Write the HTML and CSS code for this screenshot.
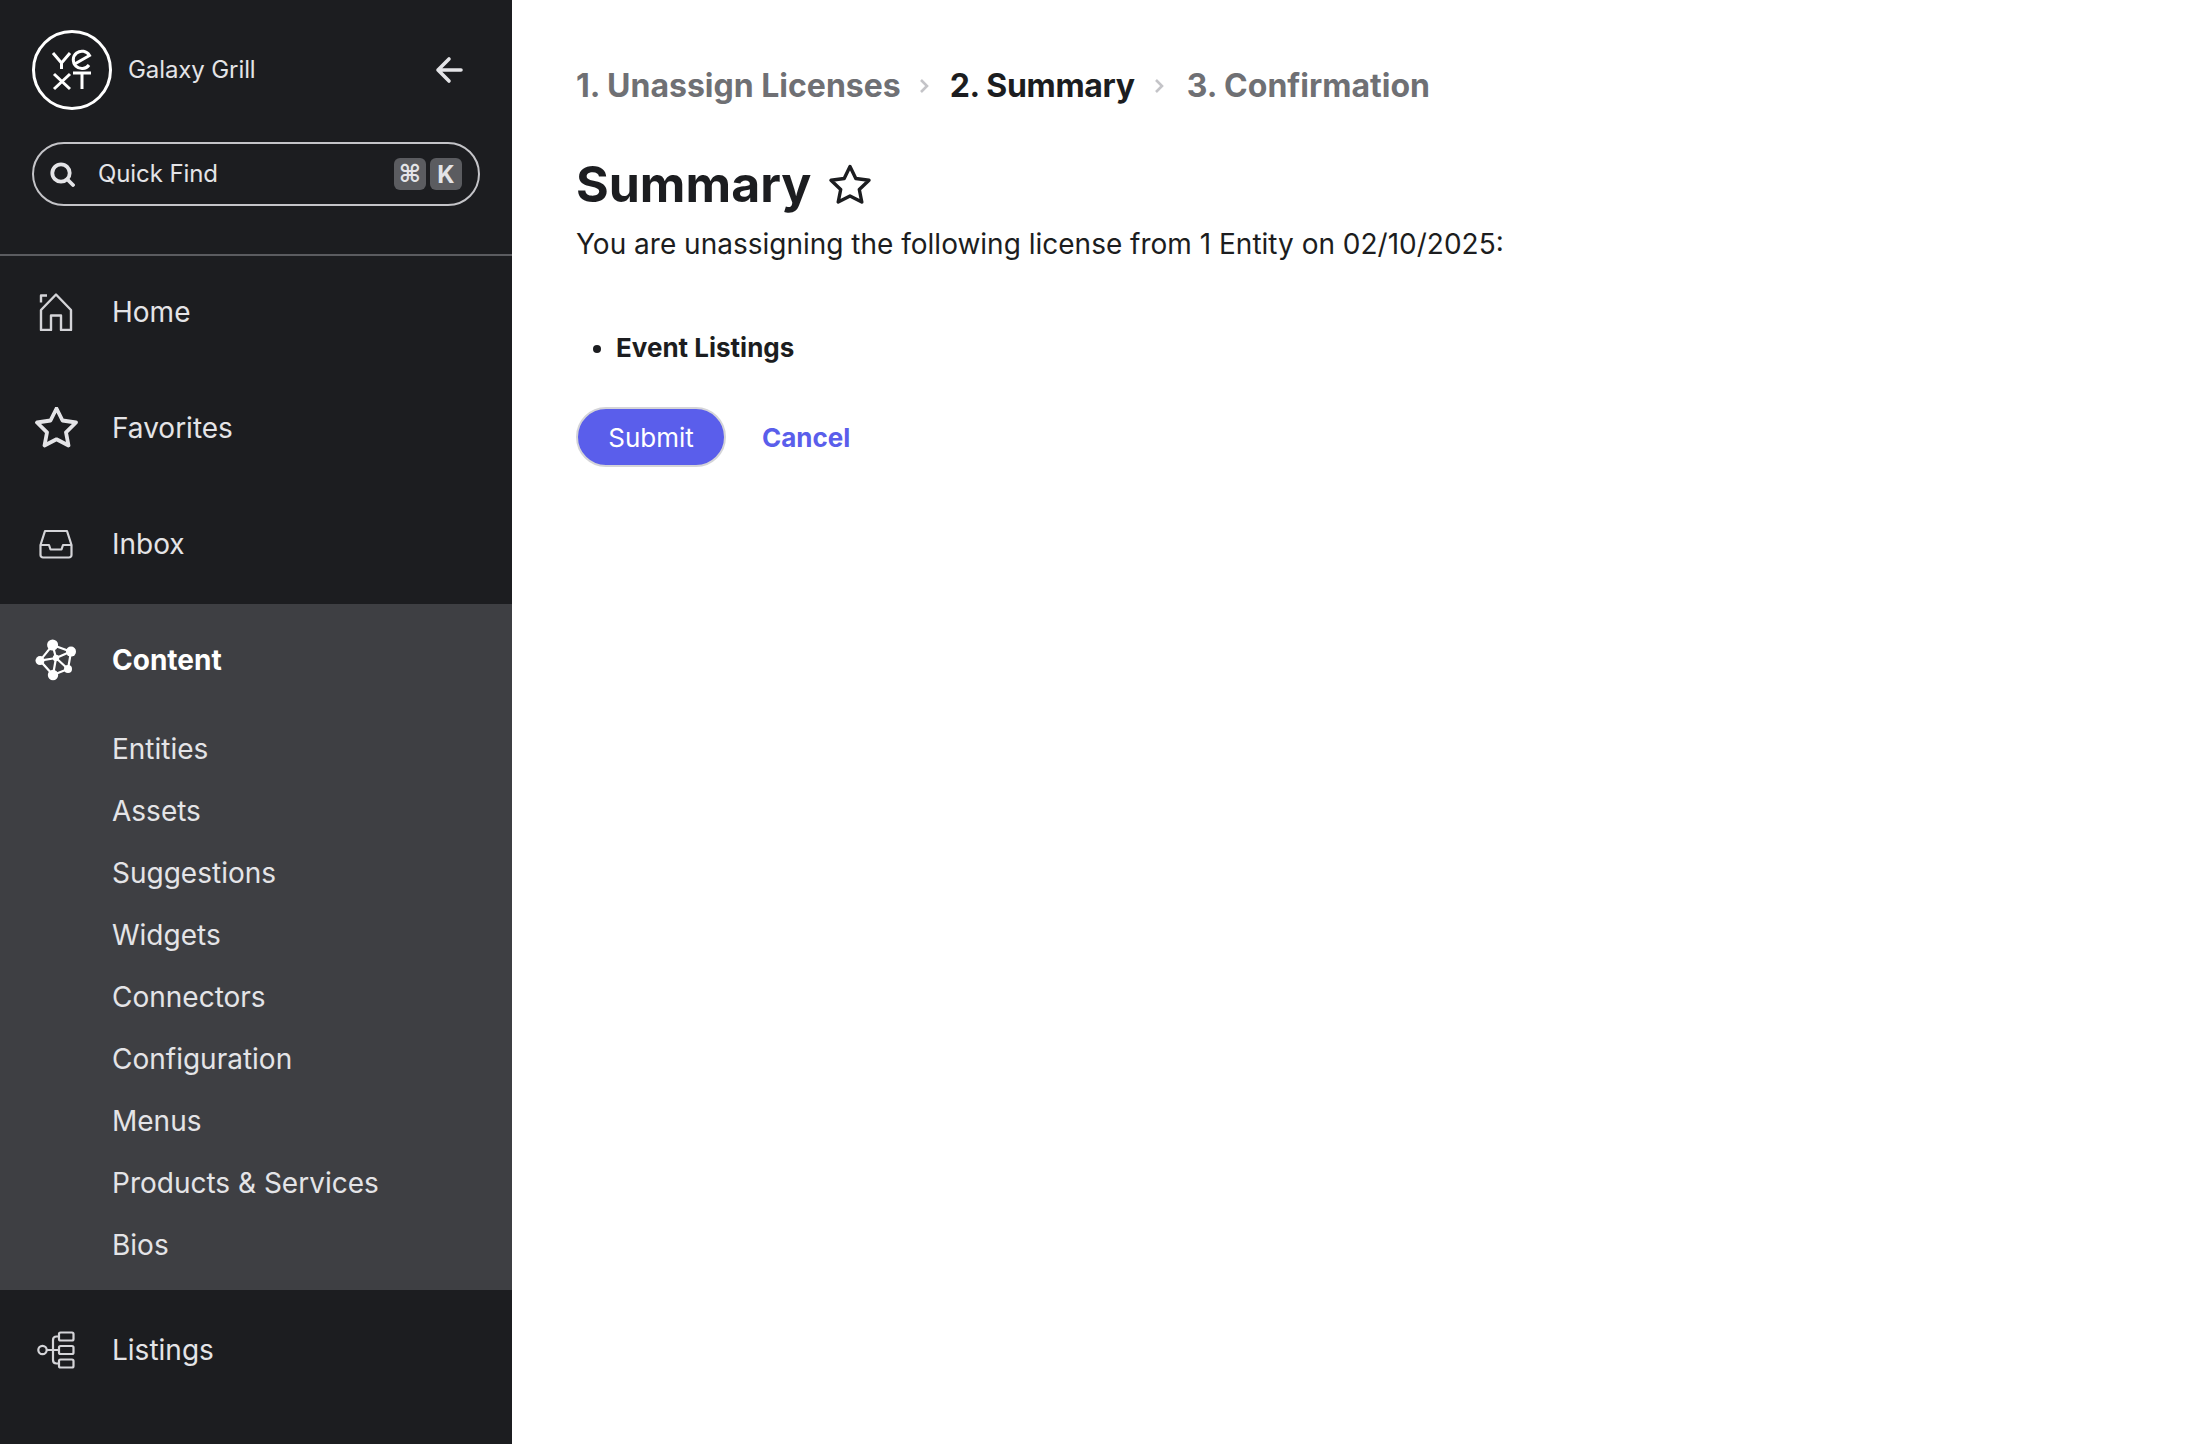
FILE: index.html
```html
<!DOCTYPE html>
<html lang="en">
<head>
<meta charset="utf-8">
<title>Summary</title>
<link rel="stylesheet" href="styles.css">
</head>
<body>
<div class="app">
  <aside class="sidebar">
    <header class="side-head">
      <div class="brand">
        <div class="logo">
          <svg viewBox="0 0 80 80" width="80" height="80" fill="none" stroke="#fff">
            <circle cx="40" cy="40" r="38.5" stroke-width="3"/>
            <g stroke-width="3">
              <path d="M21 23L29.500 33L38 23M29.500 33V39"/>
              <path d="M43.500 33.500L57.500 25.500A8.700 8.700 0 1 0 57 35"/>
              <path d="M22 44L38 59M38 44L22 59"/>
              <path d="M41 43H59M50 43V59"/>
            </g>
          </svg>
        </div>
        <span class="brand-name">Galaxy Grill</span>
        <svg class="back" viewBox="0 0 28 28" width="28" height="28" fill="none" stroke="#e4e4e7" stroke-width="3.600" stroke-linecap="round" stroke-linejoin="round">
          <path d="M26 14H3M14 3L3 14 14 25"/>
        </svg>
      </div>
      <div class="search">
        <svg class="search-icon" viewBox="0 0 25 25" width="25" height="25" fill="none" stroke="#e4e4e7" stroke-width="3.800" stroke-linecap="round">
          <circle cx="11" cy="11" r="8.700"/><path d="M17.500 17.500L23 23"/>
        </svg>
        <span class="search-label">Quick Find</span>
        <span class="key key-cmd">⌘</span>
        <span class="key">K</span>
      </div>
    </header>
    <nav class="nav">
      <a class="nav-row">
        <svg class="nav-icon" viewBox="0 0 48 38" width="48" height="38" fill="none" stroke="#d4d4d8" stroke-width="2.400" stroke-linejoin="round">
          <path d="M9 9.500V2.500H15M9 17L24 1.500L39 17V37H29V22.500H19V37H9Z"/>
        </svg>
        <span>Home</span>
      </a>
      <a class="nav-row">
        <svg class="nav-icon" viewBox="0 0 48 42" width="48" height="42" fill="none" stroke="#e4e4e7" stroke-width="3.800" stroke-linejoin="round">
          <path d="M24.500 1.500L30.500 13.500 44 15.500 34 25.300 36.500 38.500 24.500 32.300 12.500 38.500 15 25.300 5 15.500 18.500 13.500Z"/>
        </svg>
        <span>Favorites</span>
      </a>
      <a class="nav-row">
        <svg class="nav-icon" viewBox="0 0 48 30" width="48" height="30" fill="none" stroke="#d4d4d8" stroke-width="2.200" stroke-linejoin="round">
          <path d="M13 2H35L39.500 16V26A2.500 2.500 0 0 1 37 28.500H11A2.500 2.500 0 0 1 8.500 26V16ZM8.500 16H17L18.500 20.500H29.500L31 16H39.500"/>
        </svg>
        <span>Inbox</span>
      </a>
      <section class="nav-group">
        <a class="nav-row nav-row-active">
          <svg class="nav-icon" viewBox="0 0 48 48" width="48" height="48" fill="none" stroke="#fff" stroke-width="2.200">
            <path d="M20.600 9L39 15.600 36 33 21 39 8 24.600ZM20.600 9L24 22M39 15.600L24 22M8 24.600L24 22M36 33L24 22M21 39L24 22"/>
            <g fill="#fff" stroke="none">
              <circle cx="20.600" cy="9" r="5.500"/><circle cx="39" cy="15.600" r="5"/><circle cx="8" cy="24.600" r="4.500"/><circle cx="24" cy="22" r="3.200"/><circle cx="36" cy="33" r="4"/><circle cx="21" cy="39" r="5.200"/>
            </g>
          </svg>
          <span>Content</span>
        </a>
        <ul class="sub">
          <li>Entities</li>
          <li>Assets</li>
          <li>Suggestions</li>
          <li>Widgets</li>
          <li>Connectors</li>
          <li>Configuration</li>
          <li>Menus</li>
          <li>Products &amp; Services</li>
          <li>Bios</li>
        </ul>
      </section>
      <a class="nav-row nav-row-after">
        <svg class="nav-icon" viewBox="0 0 48 38" width="48" height="38" fill="none" stroke="#d4d4d8" stroke-width="2.200">
          <circle cx="10.500" cy="19" r="4.200"/>
          <path d="M14.700 19H27M27 5.500H24.500Q21 5.500 21 9V29Q21 32.500 24.500 32.500H27"/>
          <rect x="27" y="1.500" width="14.500" height="8" rx="1.500"/>
          <rect x="27" y="15" width="14.500" height="8" rx="1.500"/>
          <rect x="27" y="28.500" width="14.500" height="8" rx="1.500"/>
        </svg>
        <span>Listings</span>
      </a>
    </nav>
  </aside>
  <main class="main">
    <ol class="steps">
      <li class="step">1. Unassign Licenses</li>
      <li class="sep"><svg viewBox="0 0 10 16" width="10" height="16" fill="none" stroke="#c4c4c8" stroke-width="2.600"><path d="M2 2L8 8 2 14"/></svg></li>
      <li class="step step-current">2. Summary</li>
      <li class="sep sep-last"><svg viewBox="0 0 10 16" width="10" height="16" fill="none" stroke="#c4c4c8" stroke-width="2.600"><path d="M2 2L8 8 2 14"/></svg></li>
      <li class="step">3. Confirmation</li>
    </ol>
    <div class="title-row">
      <h1 class="title">Summary</h1>
      <svg class="title-star" viewBox="0 0 44 40" width="44" height="40" fill="none" stroke="#1c1d20" stroke-width="3.400" stroke-linejoin="round">
        <path d="M22 2.500L27.800 14.500 41 16.300 31.300 25.500 33.800 38 22 32 10.200 38 12.700 25.500 3 16.300 16.200 14.500Z"/>
      </svg>
    </div>
    <p class="lead">You are unassigning the following license from 1 Entity on 02/10/2025:</p>
    <ul class="licenses"><li>Event Listings</li></ul>
    <div class="actions">
      <button class="btn-submit" type="button">Submit</button>
      <a class="btn-cancel">Cancel</a>
    </div>
  </main>
</div>
</body>
</html>
```

FILE: styles.css
```css
* { box-sizing: border-box; }
html, body { margin: 0; height: 100%; overflow: hidden; }
body { font-family: Inter, "Liberation Sans", sans-serif; background: #fff; color: #1c1d20; }
.app { display: flex; height: 1444px; }

.sidebar { width: 512px; flex: none; background: #1c1d20; color: #e4e4e7; overflow: hidden; }
.side-head { padding: 30px 32px 0; height: 256px; border-bottom: 2px solid #5b5c60; }
.brand { display: flex; align-items: center; height: 80px; }
.logo { width: 80px; height: 80px; flex: none; }
.logo svg { display: block; }
.brand-name { margin-left: 16px; padding-bottom: 2px; font-size: 24px; letter-spacing: -0.1px; color: #e4e4e7; flex: 1; }
.back { margin-right: 17px; }
.search { display: flex; align-items: center; height: 64px; margin-top: 32px; padding: 0 16px 0 16px; border: 2px solid #c4c4c8; border-radius: 32px; }
.search-icon { flex: none; }
.search-label { flex: 1; margin-left: 23px; padding-bottom: 2px; font-size: 24px; letter-spacing: -0.1px; color: #e4e4e7; }
.key { display: flex; align-items: center; justify-content: center; width: 32px; height: 32px; border-radius: 6px; background: #5b5c60; color: #e4e4e7; font-size: 24px; font-weight: 700; margin-left: 4px; }
.key-cmd { font-family: "DejaVu Sans", sans-serif; font-weight: 700; font-size: 24px; }

.nav { display: block; }
.nav-row { display: flex; align-items: center; height: 116px; padding: 0 0 4px 32px; font-size: 28px; color: #e4e4e7; }
.nav-row-after { padding: 4px 0 0 32px; }
.nav-icon { flex: none; width: 48px; margin-right: 32px; }
.nav-group { background: #3e3f43; }
.nav-row-active { color: #fff; font-weight: 700; }
.sub { list-style: none; margin: -2px 0 0; padding: 0 0 14px 112px; }
.sub li { height: 62px; line-height: 62px; font-size: 28px; color: #e4e4e7; }

.main { flex: 1; padding: 62px 64px 0; }
.steps { list-style: none; display: flex; align-items: center; margin: 0; padding: 0; font-size: 32px; font-weight: 700; line-height: 48px; color: #6f7074; }
.step-current { color: #1c1d20; letter-spacing: -0.3px; }
.sep { display: flex; margin: 0 21px 0 18px; }
.sep-last { margin: 0 23px 0 19px; }
.title-row { display: flex; align-items: center; margin-top: 38px; }
.title { margin: 0; font-size: 50px; font-weight: 700; line-height: 72px; color: #1c1d20; }
.title-star { margin-left: 17px; }
.lead { margin: 3px 0 0; font-size: 28px; line-height: 42px; color: #1c1d20; }
.licenses { margin: 63px 0 0; padding-left: 40px; font-size: 26px; line-height: 40px; font-weight: 700; }
.actions { display: flex; align-items: center; margin-top: 39px; }
.btn-submit { height: 60px; width: 150px; border: 2px solid #d4d4d8; border-radius: 30px; background: #5a5eeb; color: #fff; font: 400 26px Inter, sans-serif; }
.btn-cancel { margin-left: 36px; font-size: 26px; font-weight: 700; color: #5a5eeb; }
```
